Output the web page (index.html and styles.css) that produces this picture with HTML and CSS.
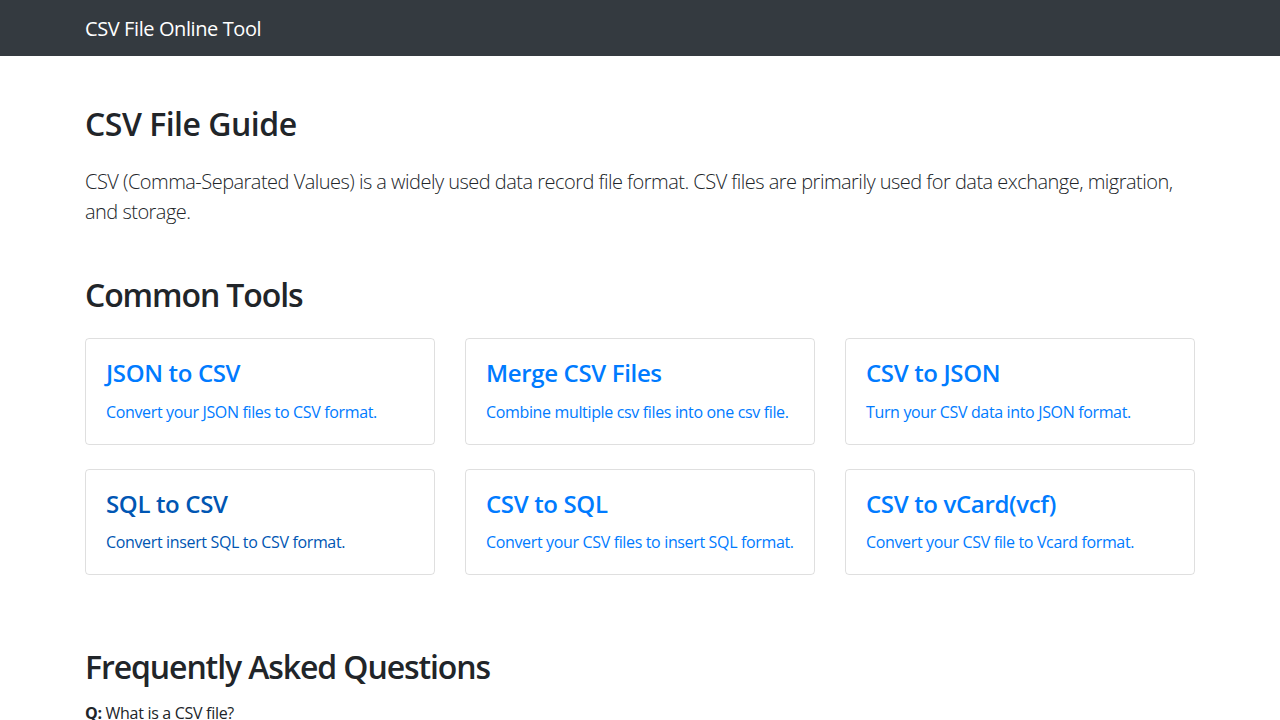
FILE: index.html
```html
<!DOCTYPE html>
<html lang="en">
<head>
<meta charset="utf-8">
<title>CSV File Online Tool</title>
<link rel="stylesheet" href="styles.css">
</head>
<body>
<nav class="navbar">
  <div class="container">
    <a class="brand" href="#">CSV File Online Tool</a>
  </div>
</nav>
<main class="container main">
  <section class="intro">
    <h2 class="heading">CSV File Guide</h2>
    <p class="lead">CSV (Comma-Separated Values) is a widely used data record file format. CSV files are primarily used for data exchange, migration, and storage.</p>
  </section>
  <section class="tools">
    <h2 class="heading tools-heading">Common Tools</h2>
    <div class="card-grid">
      <a class="card" href="#"><h4 class="card-title">JSON to CSV</h4><p class="card-text">Convert your JSON files to CSV format.</p></a>
      <a class="card" href="#"><h4 class="card-title">Merge CSV Files</h4><p class="card-text">Combine multiple csv files into one csv file.</p></a>
      <a class="card" href="#"><h4 class="card-title">CSV to JSON</h4><p class="card-text">Turn your CSV data into JSON format.</p></a>
      <a class="card card-hover" href="#"><h4 class="card-title">SQL to CSV</h4><p class="card-text">Convert insert SQL to CSV format.</p></a>
      <a class="card" href="#"><h4 class="card-title">CSV to SQL</h4><p class="card-text">Convert your CSV files to insert SQL format.</p></a>
      <a class="card" href="#"><h4 class="card-title">CSV to vCard(vcf)</h4><p class="card-text">Convert your CSV file to Vcard format.</p></a>
    </div>
  </section>
  <section class="faq">
    <h2 class="heading faq-heading">Frequently Asked Questions</h2>
    <p class="faq-q"><strong>Q:</strong> What is a CSV file?</p>
  </section>
</main>
</body>
</html>
```
FILE: styles.css
```css
* { box-sizing: border-box; }
html, body { margin: 0; }
body {
  font-family: "Open Sans", "Noto Sans", "Liberation Sans", sans-serif;
  font-size: 16px;
  line-height: 1.5;
  color: #212529;
  background: #fff;
}
.container {
  width: 1140px;
  margin: 0 auto;
  padding: 0 15px;
}
.navbar {
  background: #343a40;
  height: 56px;
  display: flex;
  align-items: center;
}
.brand {
  display: block;
  padding-top: 2px;
  color: #fff;
  text-decoration: none;
  font-size: 20px;
  line-height: 30px;
  letter-spacing: -0.4px;
}
.main { padding-top: 49px; }
.heading {
  margin: 0 0 24px;
  font-size: 32px;
  font-weight: 600;
  line-height: 1.2;
  letter-spacing: -1.1px;
}
.intro .heading { letter-spacing: -0.5px; }
.lead {
  margin: 0;
  font-size: 20px;
  font-weight: 300;
  line-height: 30px;
  letter-spacing: -0.52px;
}
.tools { margin-top: 49px; }
.tools-heading { margin-bottom: 23px; }
.card-grid {
  display: grid;
  grid-template-columns: repeat(3, 1fr);
  column-gap: 30px;
  row-gap: 24px;
}
.card {
  display: block;
  border: 1px solid rgba(0,0,0,.125);
  border-radius: 4px;
  padding: 20px;
  color: #007bff;
  text-decoration: none;
}
.card-hover { color: #0056b3; }
.card-title {
  margin: 0 0 12px;
  font-size: 24px;
  font-weight: 600;
  line-height: 1.2;
  letter-spacing: -0.35px;
}
.card-text {
  margin: 0;
  font-size: 16px;
  line-height: 24px;
  letter-spacing: -0.35px;
  white-space: nowrap;
}
.faq { margin-top: 73px; }
.faq-heading { margin-bottom: 14px; }
.faq-q {
  margin: 0;
  letter-spacing: -0.3px;
}
.faq-q strong { font-weight: 700; }
```
